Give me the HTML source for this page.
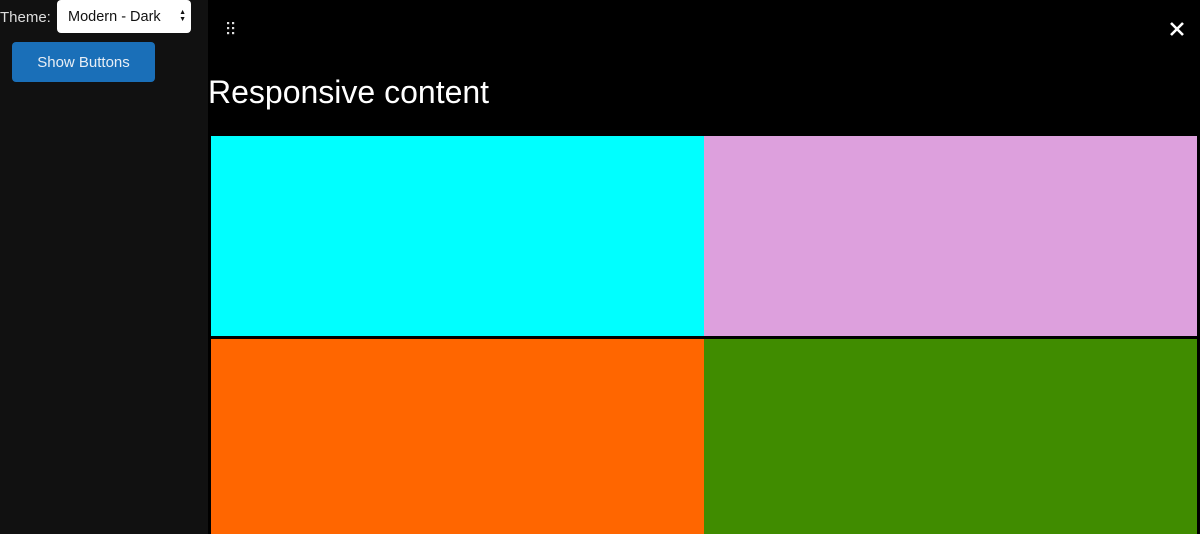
<!DOCTYPE html>
<html><head><style>
body{margin:0;width:1200px;height:534px;overflow:hidden;background:#000;font-family:"Liberation Sans",sans-serif;position:relative}
#side{position:absolute;left:0;top:0;width:208px;height:534px;background:#111}
.lbl{position:absolute;left:0;top:9px;color:#ddd;font-size:15px}
.sel{position:absolute;left:57px;top:0;width:134px;height:33px;background:#fff;border-radius:4px;box-sizing:border-box;font-size:14.5px;color:#111;padding:9px 0 0 11px}
.btn{position:absolute;left:12px;top:42px;width:143px;height:40px;background:#1a6fb8;border-radius:4px;color:#e8eef5;font-size:15px;text-align:center;line-height:42px}
h1{position:absolute;left:208px;top:74px;margin:0;color:#fff;font-weight:normal;font-size:32px;font-family:"Liberation Sans",sans-serif}
.c{position:absolute}
</style></head><body>
<div id="side">
<div class="lbl">Theme:</div>
<div class="sel">Modern - Dark<span style="position:absolute;right:5px;top:9px;font-size:7px;line-height:7px">▲<br>▼</span></div>
<div class="btn">Show Buttons</div>
</div>
<svg class="c" style="left:224px;top:20px" width="14" height="16"><g fill="#ddd"><rect x="3" y="2" width="2.2" height="2.2"/><rect x="8" y="2" width="2.2" height="2.2"/><rect x="3" y="7" width="2.2" height="2.2"/><rect x="8" y="7" width="2.2" height="2.2"/><rect x="3" y="12" width="2.2" height="2.2"/><rect x="8" y="12" width="2.2" height="2.2"/></g></svg>
<svg class="c" style="left:1168px;top:20px" width="18" height="18"><path d="M3 3L15 15M15 3L3 15" stroke="#fff" stroke-width="2.6"/></svg>
<h1>Responsive content</h1>
<div class="c" style="left:211px;top:136px;width:493px;height:200px;background:#0ff"></div>
<div class="c" style="left:704px;top:136px;width:493px;height:200px;background:#dda0dd"></div>
<div class="c" style="left:211px;top:339px;width:493px;height:195px;background:#f60"></div>
<div class="c" style="left:704px;top:339px;width:493px;height:195px;background:#408c00"></div>
</body></html>
